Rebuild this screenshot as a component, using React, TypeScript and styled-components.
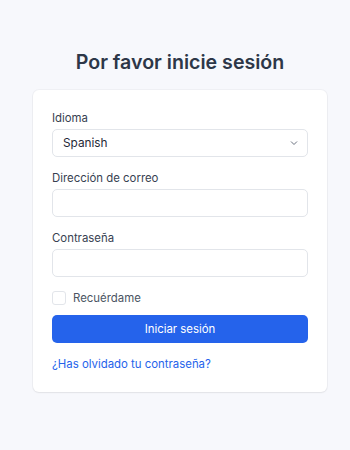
import styled, { createGlobalStyle } from "styled-components";

const GlobalStyle = createGlobalStyle`
  html, body {
    margin: 0;
    padding: 0;
    background: #f7f8fc;
    font-family: Inter, "Noto Sans", sans-serif;
    color: #1f2937;
  }
  * { box-sizing: border-box; }
`;

const Page = styled.div`
  min-height: 450px;
  display: flex;
  flex-direction: column;
  align-items: center;
  padding: 48px 0 0 10px;
`;

const Title = styled.h2`
  margin: 0 0 14px;
  font-size: 19.6px;
  line-height: 28px;
  font-weight: 600;
  color: #2d3748;
`;

const Card = styled.form`
  width: 294px;
  background: #fff;
  border-radius: 6px;
  box-shadow: 0 1px 2px rgba(0, 0, 0, 0.06), 0 0 0 1px rgba(0, 0, 0, 0.03);
  padding: 21px 19px 21px;
  display: flex;
  flex-direction: column;
`;

const Field = styled.div`
  display: flex;
  flex-direction: column;
  gap: 4px;
  margin-bottom: 14px;
`;

const Label = styled.label`
  font-size: 11.4px;
  line-height: 14px;
  color: #374151;
`;

const Input = styled.input`
  height: 28px;
  width: 100%;
  border: 1px solid #e2e5ea;
  border-radius: 5px;
  background: #fff;
  font-family: inherit;
  font-size: 12px;
  padding: 0 10px;
`;

const SelectBox = styled.div`
  height: 28px;
  border: 1px solid #e2e5ea;
  border-radius: 5px;
  display: flex;
  align-items: center;
  justify-content: space-between;
  padding: 0 8px 0 10px;
  font-size: 11.8px;
  color: #1f2937;
`;

const CheckRow = styled.div`
  display: flex;
  align-items: center;
  gap: 7px;
  margin: 0 0 10px;
  height: 14px;
  font-size: 11.4px;
  color: #4b5563;
`;

const Box = styled.span`
  width: 14px;
  height: 14px;
  border: 1px solid #e2e5ea;
  border-radius: 3px;
  background: #fff;
`;

const Button = styled.button`
  height: 28px;
  border: none;
  border-radius: 5px;
  background: #2563eb;
  color: #fff;
  font-family: inherit;
  font-size: 11.4px;
  margin-bottom: 14px;
`;

const Link = styled.a`
  font-size: 11.4px;
  line-height: 14px;
  color: #2563eb;
  text-decoration: none;
`;

export default function App() {
  return (
    <>
      <GlobalStyle />
      <Page>
        <Title>Por favor inicie sesión</Title>
        <Card>
          <Field>
            <Label>Idioma</Label>
            <SelectBox>
              <span>Spanish</span>
              <svg width="10" height="10" viewBox="0 0 10 10">
                <path d="M2 3.5l3 3 3-3" fill="none" stroke="#6b7280" strokeWidth="1" />
              </svg>
            </SelectBox>
          </Field>
          <Field>
            <Label>Dirección de correo</Label>
            <Input type="email" />
          </Field>
          <Field>
            <Label>Contraseña</Label>
            <Input type="password" />
          </Field>
          <CheckRow>
            <Box />
            <span>Recuérdame</span>
          </CheckRow>
          <Button type="button">Iniciar sesión</Button>
          <Link href="#">¿Has olvidado tu contraseña?</Link>
        </Card>
      </Page>
    </>
  );
}
